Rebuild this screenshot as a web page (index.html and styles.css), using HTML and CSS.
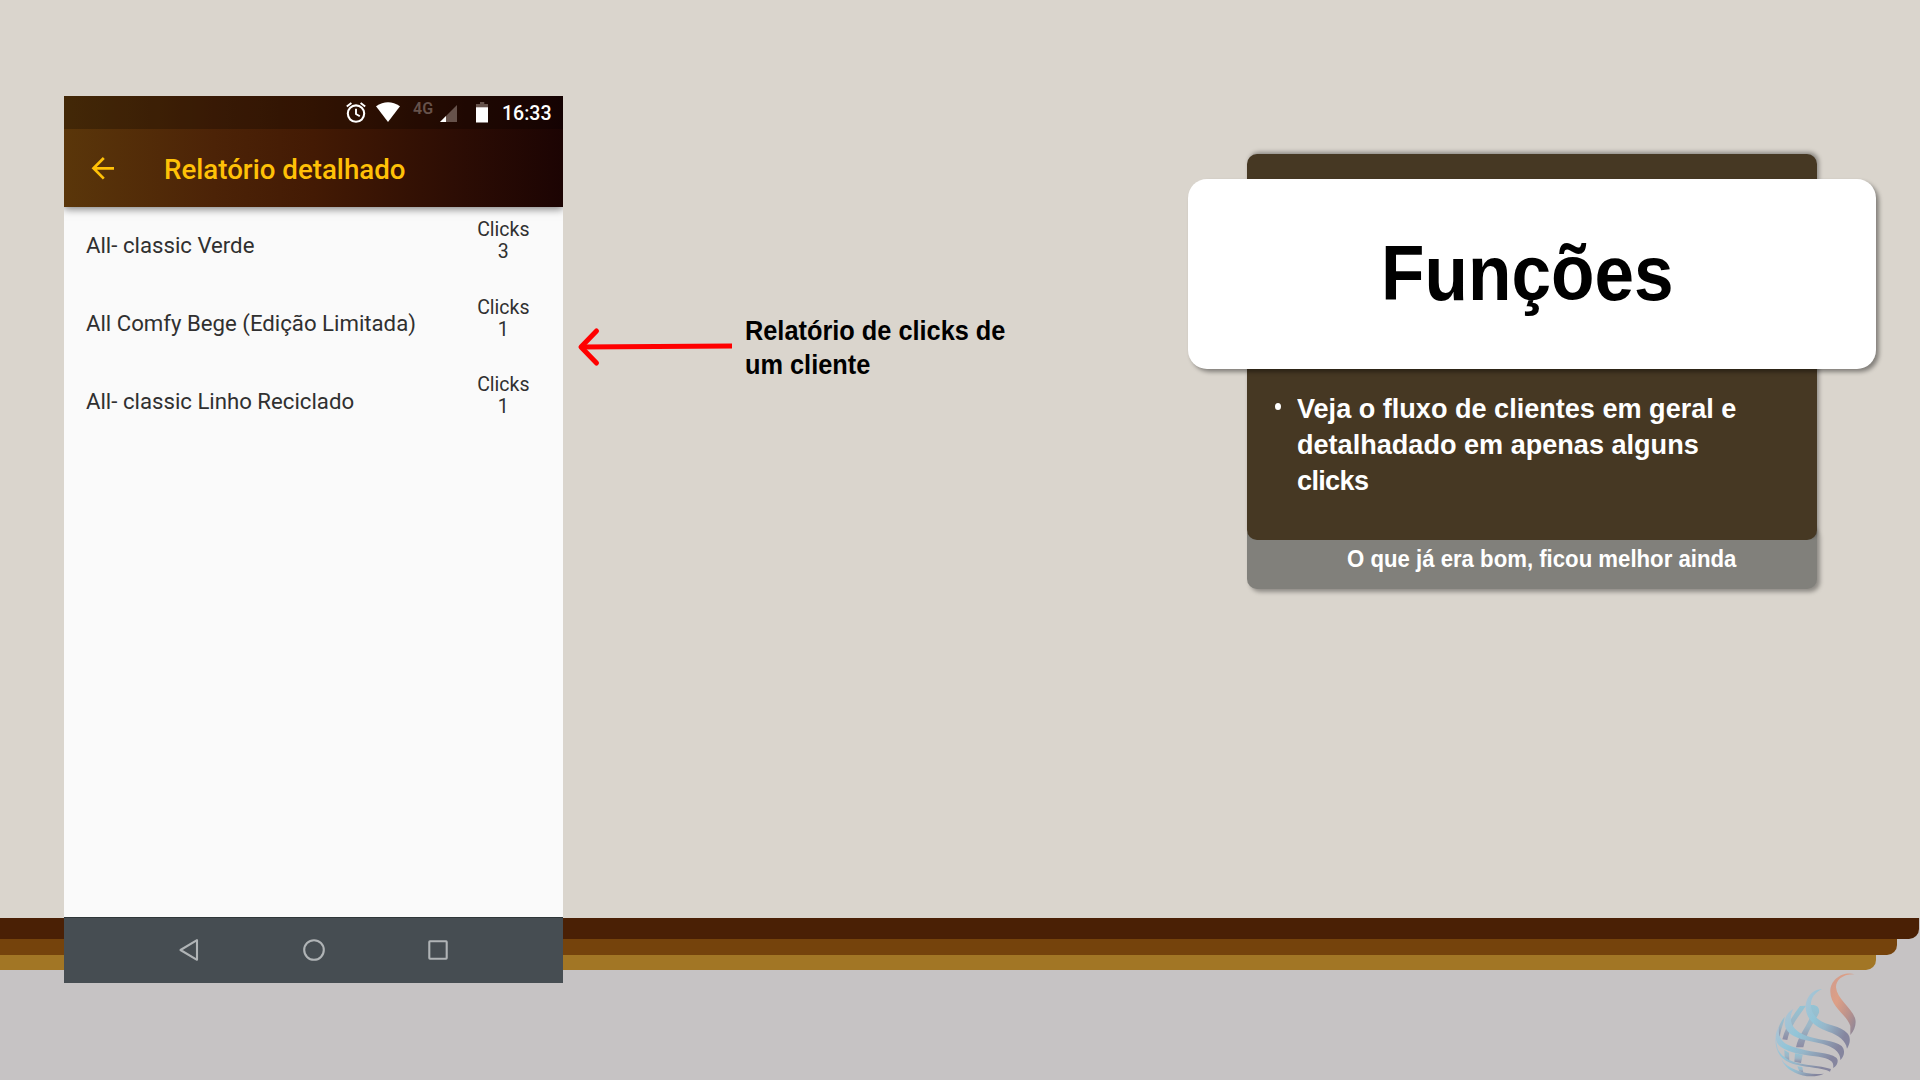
FILE: index.html
```html
<!DOCTYPE html>
<html lang="pt-BR">
<head>
<meta charset="utf-8">
<title>Funções</title>
<link rel="stylesheet" href="styles.css">
</head>
<body>
<main class="slide">
  <div class="backdrop">
    <div class="stripe stripe-dark"></div>
    <div class="stripe stripe-mid"></div>
    <div class="stripe stripe-gold"></div>
    <svg class="logo" viewBox="90 210 270 330" aria-hidden="true">
      <defs>
        <linearGradient id="band" x1="0" y1="0" x2="1" y2="0.6">
          <stop offset="0" stop-color="#b0c3d3"/><stop offset=".35" stop-color="#92c5d8"/><stop offset=".6" stop-color="#96b6c9"/><stop offset="1" stop-color="#85859e"/>
        </linearGradient>
        <linearGradient id="rib" x1="0" y1="0" x2="0" y2="1">
          <stop offset="0" stop-color="#93c4d5"/><stop offset=".5" stop-color="#9db6c6"/><stop offset="1" stop-color="#8d8ca4"/>
        </linearGradient>
        <linearGradient id="flame" x1="0" y1="0" x2="1" y2="1">
          <stop offset="0" stop-color="#cf9c8e"/><stop offset=".35" stop-color="#dd9f86"/><stop offset=".7" stop-color="#b8918c"/><stop offset="1" stop-color="#85849b"/>
        </linearGradient>
      </defs>
      <path fill="url(#flame)" d="M344 223C310 212 270 238 271 275C272 322 322 345 331 378L331 405C345 390 350 368 345 354C333 323 290 295 288 262C288 242 305 222 344 223Z"/>
      <g fill="url(#rib)">
        <path d="M180 318L198 317C175 350 150 380 142 420L127 418C135 385 155 350 180 318Z"/>
        <path d="M207 316C227 311 240 320 237 338C225 365 204 385 190 442L168 442C175 405 203 378 213 343Z"/>
        <path d="M165 460L188 464L183 489L163 485Z"/>
        <path d="M133 450L147 458L148 487L134 474Z"/>
        <path d="M172 499L187 501L190 518L178 514Z"/>
        <path d="M134 350C117 372 112 388 113 404L120 411C120 391 132 370 134 350Z"/>
      </g>
      <g fill="url(#band)">
        <path d="M246 268C215 265 194 300 197 325C201 365 235 385 265 395C295 405 318 422 321 446C331 430 333 412 322 400C302 376 260 378 235 358C205 336 202 286 246 268Z"/>
        <path d="M160 327C135 340 130 365 137 385C150 412 190 420 225 427C265 434 303 450 301 481C314 468 316 450 305 438C282 420 235 422 195 406C158 391 141 362 160 327Z"/>
        <path d="M117 380C103 400 103 428 122 440C145 458 190 464 225 469C260 474 285 480 279 504C293 497 297 480 289 473C265 455 225 459 180 446C140 437 112 425 117 380Z"/>
        <path d="M106 410C105 450 118 476 150 488C190 503 250 502 270 515L273 507C230 491 140 502 113 447Z"/>
        <path d="M124 477C145 510 200 526 252 521C225 534 190 530 165 518C145 508 130 495 124 477Z"/>
      </g>
    </svg>
  </div>

  <div class="content">
    <section class="phone">
      <header class="phone-top">
        <div class="status">
          <svg class="ic-alarm" viewBox="0 0 20 21" fill="none" stroke="#fff" stroke-width="2.1"><circle cx="10" cy="11.6" r="8.2"/><path d="M.8 4.6L5.4 .9M19.2 4.6L14.6 .9M10 6.8V12L13.8 14.3" stroke-width="1.9"/></svg>
          <svg class="ic-wifi" viewBox="0 0 24 21"><path fill="#fff" d="M0 4.3Q12-3.8 24 4.3L12 20Z"/></svg>
          <span class="net">4G</span>
          <svg class="ic-signal" viewBox="0 0 17 17"><path fill="#66524b" d="M17 0V17H0Z"/><path fill="#fff" d="M6 11V17H0Z"/></svg>
          <svg class="ic-battery" viewBox="0 0 12 21"><path fill="#66524b" d="M4 0H8.3V2H12V6H0V2H4Z"/><path fill="#fff" d="M0 5.3H12V20.5H0Z"/></svg>
          <span class="clock">16:33</span>
        </div>
        <div class="appbar">
          <svg class="ic-back" viewBox="0 0 23 23" fill="none" stroke="#ffc107" stroke-width="2.7"><path d="M22.5 11.3H2M12.3 1L2 11.3L12.3 21.6"/></svg>
          <h2 class="screen-title">Relatório detalhado</h2>
        </div>
      </header>
      <ul class="items">
        <li class="item"><span class="name">All- classic Verde</span><span class="count">Clicks<br>3</span></li>
        <li class="item"><span class="name">All Comfy Bege (Edição Limitada)</span><span class="count">Clicks<br>1</span></li>
        <li class="item"><span class="name">All- classic Linho Reciclado</span><span class="count">Clicks<br>1</span></li>
      </ul>
      <nav class="navbar">
        <svg class="ic-nav" viewBox="0 0 24 24"><path d="M3.5 12L20 2.2V21.8Z"/></svg>
        <svg class="ic-nav" viewBox="0 0 24 24"><circle cx="12" cy="12" r="9.8"/></svg>
        <svg class="ic-nav" viewBox="0 0 24 24"><rect x="3.3" y="3.3" width="17.4" height="17.4" rx=".6"/></svg>
      </nav>
    </section>

    <div class="note">
      <svg class="arrow" viewBox="0 0 156 42" fill="none" stroke="#f00" stroke-width="5"><path d="M4 21L155 20"/><path d="M19.5 5L4 21L19.5 37" stroke-linecap="round" stroke-linejoin="round"/></svg>
      <p class="note-text">Relatório de clicks de<br>um cliente</p>
    </div>

    <section class="panel">
      <div class="card">
        <div class="card-title"><h1 class="heading">Funções</h1></div>
        <div class="card-body">
          <span class="bullet"></span>
          <p class="feature">Veja o fluxo de clientes em geral e<br>detalhadado em apenas alguns<br><span class="tighter">clicks</span></p>
        </div>
      </div>
      <div class="footer"><p class="tagline">O que já era bom, ficou melhor ainda</p></div>
    </section>
  </div>
</main>
</body>
</html>
```
FILE: styles.css
```css
* { box-sizing: border-box; margin: 0; padding: 0; }
body { background: #dad5cd; font-family: "Liberation Sans", Arial, sans-serif; overflow: hidden; }
svg { display: block; flex: none; }

.slide { display: grid; width: 1920px; height: 1080px; }
.backdrop, .content { grid-area: 1 / 1; }

/* Floor with three stacked stripes */
.backdrop { margin-top: 918px; height: 162px; background: #c6c3c4; }
.stripe { border-bottom-right-radius: 10px; }
.stripe-dark { width: 1919px; height: 21px; background: #4a2005; }
.stripe-mid { width: 1897px; height: 16px; background: #75430c; }
.stripe-gold { width: 1876px; height: 15px; background: #a27625; }
.logo { width: 90px; height: 110px; margin-left: 1770px; }

.content { display: flex; align-items: flex-start; z-index: 1; }

/* Phone */
.phone {
  display: flex; flex-direction: column; flex: none;
  width: 499px; height: 887px; margin: 96px 0 0 64px;
  background: #fafafa; font-family: Roboto, sans-serif; overflow: hidden;
}
.phone-top {
  height: 111px; flex: none;
  background: linear-gradient(90deg, #5a360a 0%, #4c2307 30%, #431a04 50%, #2d0d04 78%, #1c0403 100%);
  box-shadow: 0 2px 8px rgba(0, 0, 0, .5);
}
.status { display: flex; align-items: flex-start; height: 33px; padding-left: 282px; background: rgba(0, 0, 0, .26); }
.ic-alarm { width: 20px; height: 21px; margin-top: 6px; }
.ic-wifi { width: 24px; height: 21px; margin: 6px 0 0 10px; }
.net { width: 22px; margin: 4px 0 0 13px; color: #66524b; font-size: 16px; font-weight: 600; line-height: 17px; }
.ic-signal { width: 17px; height: 17px; margin: 9px 0 0 5px; }
.ic-battery { width: 12px; height: 21px; margin: 6px 0 0 19px; }
.clock { margin: 6px 0 0 14px; color: #fff; font-size: 19.5px; font-weight: 500; line-height: 24px; }
.appbar { display: flex; align-items: flex-start; height: 78px; padding: 28px 0 0 27px; }
.ic-back { width: 24px; height: 23px; }
.screen-title { margin: -3px 0 0 49px; color: #ffc107; font-size: 27.7px; font-weight: 500; line-height: 32px; white-space: nowrap; }

.items { flex: 1; list-style: none; }
.item { display: flex; justify-content: space-between; height: 77.7px; padding: 12px 33.5px 0 22px; color: #303030; }
.name { padding-top: 11.4px; font-size: 22.2px; line-height: 30px; white-space: nowrap; }
.count { font-size: 19.5px; line-height: 22px; text-align: center; }

.navbar {
  display: flex; justify-content: center; align-items: center; gap: 100.6px;
  height: 66px; padding-bottom: 2px; background: #464d52; border-top: 1px solid #2f3639;
}
.ic-nav { width: 24px; height: 24px; fill: none; stroke: #b0b4b6; stroke-width: 2.1; stroke-linejoin: round; }

/* Callout */
.note { display: flex; align-items: flex-start; flex: none; width: 625px; padding: 314px 0 0 14px; }
.arrow { width: 156px; height: 42px; margin-top: 12px; }
.note-text { margin-left: 12px; font-size: 27px; font-weight: 700; line-height: 34px; color: #000; white-space: nowrap; transform: scaleX(.938); transform-origin: 0 0; }

/* Feature panel */
.panel { width: 570px; margin: 154px 0 0 59px; color: #fff; font-weight: 700; flex: none; }
.card { position: relative; z-index: 1; height: 386px; padding-top: 25px; background: #463823; border-radius: 10px; box-shadow: 2px -2px 4px rgba(0, 0, 0, .35); clip-path: inset(-10px -70px 0 -70px); }
.card-title { height: 190px; margin: 0 -59px; padding: 52px 0 0 193px; background: #fff; border-radius: 19px; box-shadow: 3px 3px 4px rgba(0, 0, 0, .4); }
.heading { color: #000; font-size: 77px; line-height: 84px; transform: scaleX(.924); transform-origin: 0 0; }
.card-body { display: flex; align-items: flex-start; padding: 21px 0 0 28px; }
.bullet { width: 6px; height: 7px; margin: 13px 16px 0 0; border-radius: 50%; background: #fff; }
.feature { font-size: 28.5px; line-height: 36px; white-space: nowrap; transform: scaleX(.95); transform-origin: 0 0; }
.tighter { letter-spacing: -.7px; }
.footer { height: 65px; margin-top: -16px; padding: 21px 0 0 100px; background: #81807b; border-radius: 10px; box-shadow: 3px 3px 4px rgba(0, 0, 0, .35); }
.tagline { font-size: 24.5px; line-height: 28px; white-space: nowrap; transform: scaleX(.905); transform-origin: 0 0; }
```
